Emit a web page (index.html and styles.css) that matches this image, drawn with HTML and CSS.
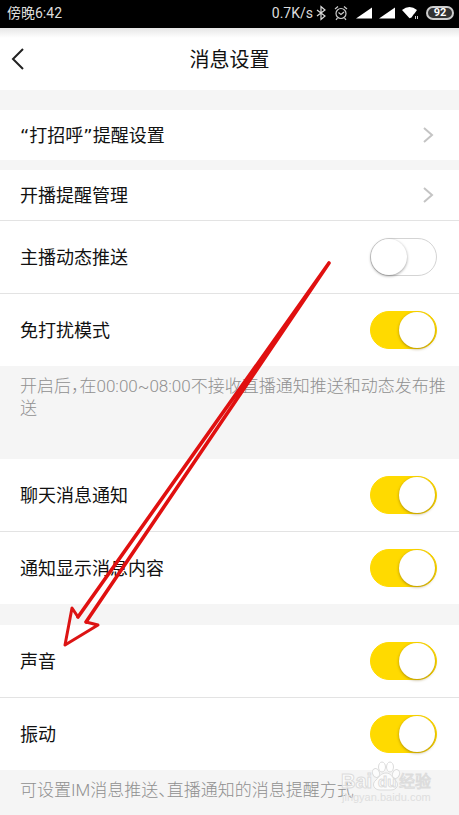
FILE: index.html
```html
<!DOCTYPE html>
<html lang="zh-CN">
<head>
<meta charset="utf-8">
<meta name="viewport" content="width=device-width, initial-scale=1">
<title>消息设置</title>
<link rel="stylesheet" href="styles.css">
</head>
<body>
<div class="screen">
  <div class="status">
    <span class="clock">傍晚6:42</span>
    <span class="speed">0.7K/s</span>
    <svg class="indicators" width="110" height="16" viewBox="0 0 110 16" fill="none" aria-hidden="true">
      <path d="M1 5l8 6-4 3.500V1.500L9 5l-8 6" stroke="#ddd" stroke-width="1.200"/>
      <g stroke="#ccc" stroke-width="1.200">
        <circle cx="25" cy="8.500" r="5"/>
        <path d="M19 4l3-2.500M31 4l-3-2.500M21.500 13l-1.500 1.800M28.500 13l1.500 1.800M22.500 7.500l2.500 2 3-2.500"/>
      </g>
      <path d="M40 13.500h16v-11zM63 13.500h16v-11z" fill="#fff"/>
      <path d="M86 5q7.500-6 15 0l-2.500 3.500-1 1-2 3-2 .8z" fill="#fff"/>
      <path d="M99.500 11v3M101.500 11v3" stroke="#ccc"/>
    </svg>
    <span class="battery">92</span>
  </div>
  <header class="header">
    <button class="back" type="button" aria-label="返回">
      <svg width="14" height="22" viewBox="0 0 14 22" fill="none"><path d="M12 1L2 11l10 10" stroke="#222" stroke-width="2"/></svg>
    </button>
    <h1 class="title">消息设置</h1>
  </header>
  <main>
    <section class="group">
      <a class="row link" href="#greeting"><span>“打招呼”提醒设置</span><svg class="chevron" width="12" height="18" viewBox="0 0 12 18"><path d="M1 2l8 7-8 7"/></svg></a>
    </section>
    <section class="group near">
      <a class="row link" href="#live"><span>开播提醒管理</span><svg class="chevron" width="12" height="18" viewBox="0 0 12 18"><path d="M1 2l8 7-8 7"/></svg></a>
      <label class="row"><span>主播动态推送</span><input class="switch" type="checkbox"></label>
      <label class="row"><span>免打扰模式</span><input class="switch" type="checkbox" checked></label>
    </section>
    <p class="note tall">开启后<span class="half">，</span>在00:00~08:00不接收直播通知推送和动态发布推送</p>
    <section class="group flush">
      <label class="row"><span>聊天消息通知</span><input class="switch" type="checkbox" checked></label>
      <label class="row"><span>通知显示消息内容</span><input class="switch" type="checkbox" checked></label>
    </section>
    <section class="group">
      <label class="row"><span>声音</span><input class="switch" type="checkbox" checked></label>
      <label class="row"><span>振动</span><input class="switch" type="checkbox" checked></label>
    </section>
    <p class="note">可设置IM消息推送<span class="half">、</span>直播通知的消息提醒方式</p>
  </main>
  <svg class="overlay" width="459" height="815" viewBox="0 0 459 815" fill="none" aria-hidden="true">
    <path d="M78 617l-6-9-7 37 33-20-12-3" stroke="#dc1414" stroke-width="3" stroke-linejoin="round"/>
    <path d="M78 617L329 263 86 622" stroke="#e01010" stroke-width="3.600" stroke-linejoin="round" stroke-linecap="round"/>
    <g class="mark">
      <text class="mark-name" x="341" y="788">Bai</text>
      <g class="paw">
        <ellipse cx="376" cy="773" rx="3.500" ry="4.500" transform="rotate(-20 376 773)"/>
        <ellipse cx="382" cy="767" rx="3.500" ry="5"/>
        <ellipse cx="390" cy="767" rx="3.500" ry="5"/>
        <ellipse cx="396" cy="774" rx="3.500" ry="4.500" transform="rotate(20 396 774)"/>
        <path d="M386 773c5 0 6 4 9 7 5 4 2 10-4 10h-11c-6 0-9-6-4-10 3-3 5-7 10-7z"/>
      </g>
      <text class="mark-du" x="378" y="787">du</text>
      <text class="mark-cn" x="399" y="787">经验</text>
      <text class="mark-url" x="342" y="801">jingyan.baidu.com</text>
    </g>
  </svg>
</div>
</body>
</html>
```
FILE: styles.css
```css
* { box-sizing: border-box; }

body {
  margin: 0;
  background: #f5f5f5;
  color: #111;
  font: 18px/26px Roboto, "Noto Sans CJK SC", sans-serif;
}

.screen {
  position: relative;
  min-height: 100vh;
  overflow: hidden;
}

.status {
  display: flex;
  align-items: center;
  height: 28px;
  padding: 0 5px 2px 7px;
  background: #000;
  color: #ddd;
  font-size: 14px;
}

.clock { margin-right: auto; }
.speed { margin-right: 3px; }
.indicators { flex: none; }

.battery {
  width: 28px;
  border: 2px solid #ccc;
  border-radius: 7px;
  background: #333;
  color: #fff;
  font-size: 11px;
  font-weight: 700;
  line-height: 10px;
  text-align: center;
}

.header {
  display: grid;
  grid-template-columns: 40px 1fr 40px;
  align-items: center;
  height: 62px;
  background: linear-gradient(#e6e6e6, #fff 10px);
}

.back {
  display: flex;
  padding: 0 0 0 11px;
  border: 0;
  background: none;
}

.title {
  margin: 0;
  padding-top: 2px;
  font-size: 20px;
  font-weight: 400;
  text-align: center;
}

.group {
  margin-top: 21px;
  background: #fff;
}

.header + main > .group:first-child { margin-top: 20px; }
.group.near { margin-top: 10px; }
.group.flush { margin-top: 0; }

.row {
  display: flex;
  align-items: center;
  justify-content: space-between;
  height: 72px;
  padding: 0 22px 0 20px;
  color: inherit;
  font-family: "DejaVu Sans", "Noto Sans CJK SC", sans-serif;
  text-decoration: none;
}

.row > span { padding-top: 2px; }
.row.link { height: 50px; padding-right: 24px; }
.row + .row { height: 73px; border-top: 1px solid #e3e3e3; }

.chevron {
  fill: none;
  stroke: #c4c4c4;
  stroke-width: 2;
}

.switch {
  position: relative;
  flex: none;
  width: 67px;
  height: 38px;
  margin: 0;
  border: 1px solid #d4d4d4;
  border-radius: 19px;
  appearance: none;
  background: #fff;
}

.switch::before {
  content: "";
  position: absolute;
  top: 0;
  left: 0;
  width: 36px;
  height: 36px;
  border-radius: 50%;
  background: #fff;
  box-shadow: 0 1px 3px rgba(0, 0, 0, .4);
}

.switch:checked {
  border-color: #ffda00;
  background: #ffda00;
}

.switch:checked::before {
  left: auto;
  right: 1px;
  box-shadow: 0 1px 3px rgba(120, 90, 0, .6);
}

.note {
  margin: 0;
  padding: 9px 10px 14px 20px;
  color: #909090;
  font-size: 17px;
  font-weight: 300;
  line-height: 22px;
}

.note.tall { padding-bottom: 40px; }
.half { font-feature-settings: "halt"; }

.overlay {
  position: absolute;
  top: 0;
  left: 0;
  pointer-events: none;
}

.mark {
  fill: rgba(255, 255, 255, .7);
  stroke: #dcdcdc;
  stroke-width: 1;
  font-family: "Liberation Sans", "Noto Sans CJK SC", sans-serif;
}

.mark-name { font-size: 20px; font-weight: 700; }
.mark-du { font-size: 15px; font-weight: 700; }
.mark-cn { font-size: 16px; fill: #fff; }
.mark-url { font-size: 11px; stroke-width: 0; fill: #dedede; }
```
